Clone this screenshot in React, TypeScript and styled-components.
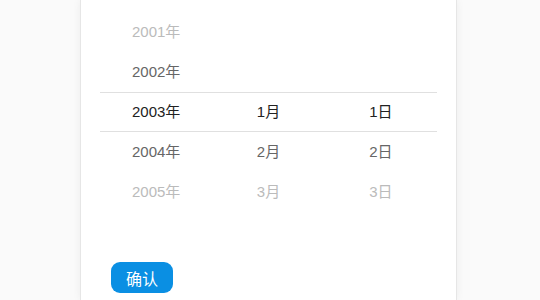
import React from 'react'
import styled, {createGlobalStyle} from 'styled-components'

const GlobalStyle = createGlobalStyle`
  html, body {
    margin: 0;
    padding: 0;
    background: #fafafa;
    font-family: "Liberation Sans", "Noto Sans CJK SC", sans-serif;
  }
`

const Page = styled.div`
  display: flex;
  justify-content: flex-start;
  height: 300px;
  overflow: hidden;
  padding-left: 80px;
`

const Panel = styled.div`
  width: 377px;
  height: 300px;
  box-sizing: border-box;
  background: #fff;
  border-left: 1px solid #e6e6e6;
  border-right: 1px solid #e6e6e6;
  box-shadow: 0 0 8px rgba(0, 0, 0, 0.06);
  padding: 12px 19px 0 19px;
  display: flex;
  flex-direction: column;
`

const Picker = styled.div`
  position: relative;
  display: flex;
`

const Highlight = styled.div`
  position: absolute;
  left: 0;
  right: 0;
  top: 80px;
  height: 40px;
  box-sizing: border-box;
  border-top: 1px solid #e0e0e0;
  border-bottom: 1px solid #e0e0e0;
  pointer-events: none;
`

const Column = styled.div`
  flex: 1;
  display: flex;
  flex-direction: column;
`

const Item = styled.div<{level: number}>`
  height: 40px;
  line-height: 40px;
  text-align: center;
  font-size: 15px;
  color: ${({level}) => (level === 0 ? '#222' : level === 1 ? '#666' : '#bbb')};
`

const Footer = styled.div`
  padding: 50px 0 0 11px;
`

const ConfirmButton = styled.button`
  width: 62px;
  height: 31px;
  border: 0;
  border-radius: 9px;
  background: #0a8fe3;
  color: #fff;
  font-size: 16px;
  font-family: "Noto Sans CJK SC", sans-serif;
  padding: 0;
  cursor: pointer;
`

type Cell = {text: string; level: number}

const columns: Cell[][] = [
  [
    {text: '2001年', level: 2},
    {text: '2002年', level: 1},
    {text: '2003年', level: 0},
    {text: '2004年', level: 1},
    {text: '2005年', level: 2},
  ],
  [
    {text: '', level: 2},
    {text: '', level: 1},
    {text: '1月', level: 0},
    {text: '2月', level: 1},
    {text: '3月', level: 2},
  ],
  [
    {text: '', level: 2},
    {text: '', level: 1},
    {text: '1日', level: 0},
    {text: '2日', level: 1},
    {text: '3日', level: 2},
  ],
]

export default function App() {
  return (
    <>
      <GlobalStyle />
      <Page>
        <Panel>
          <Picker>
            <Highlight />
            {columns.map((col, i) => (
              <Column key={i}>
                {col.map((cell, j) => (
                  <Item key={j} level={cell.level}>
                    {cell.text}
                  </Item>
                ))}
              </Column>
            ))}
          </Picker>
          <Footer>
            <ConfirmButton>确认</ConfirmButton>
          </Footer>
        </Panel>
      </Page>
    </>
  )
}
